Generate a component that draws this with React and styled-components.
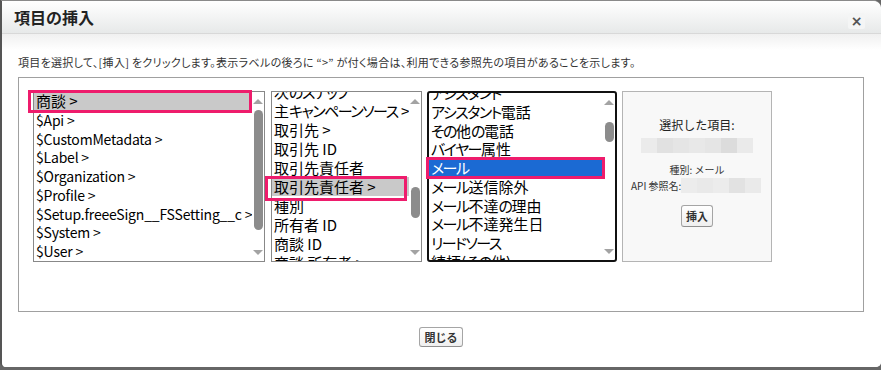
import React from "react";
import styled, { createGlobalStyle } from "styled-components";

const FONT = `"Noto Sans CJK JP", "Noto Sans", sans-serif`;

const Global = createGlobalStyle`
  html, body { margin: 0; padding: 0; background: #666; }
  body { font-family: ${FONT}; }
  * { box-sizing: border-box; }
`;

const Dialog = styled.div`
  width: 881px;
  height: 367px;
  background: #fff;
  border-left: 2px solid #555;
  border-top: 1px solid #8a8a8a;
  border-radius: 0 8px 5px 5px;
  overflow: hidden;
  display: flex;
  flex-direction: column;
`;

const Header = styled.div`
  height: 33px;
  flex: none;
  border-bottom: 1px solid #d8d8d8;
  background: linear-gradient(#ffffff, #e7e9e9);
  display: flex;
  align-items: flex-start;
  justify-content: space-between;
  padding: 0 16px 0 12px;
`;

const Title = styled.h1`
  margin: 5px 0 0;
  font-size: 16px;
  line-height: 22px;
  font-weight: bold;
  color: #222;
  font-family: ${FONT};
`;

const CloseBtn = styled.div`
  margin-top: 12px;
  width: 17px;
  height: 16px;
  border-radius: 2px;
  background: #f4f5f5;
  color: #555;
  font-size: 14px;
  line-height: 16px;
  font-weight: bold;
  text-align: center;
  font-family: "DejaVu Sans", sans-serif;
`;

const Body = styled.div`
  flex: 1;
  display: flex;
  flex-direction: column;
  padding: 0 17px 0 16px;
  background: linear-gradient(#f0f0f0 0, #ffffff 16px);
`;

const Instruction = styled.p`
  margin: 21px 0 8px;
  font-size: 11px;
  line-height: 14px;
  letter-spacing: 0.3px;
  color: #333;
  font-feature-settings: "palt";
  white-space: nowrap;
`;

const OuterBox = styled.div`
  height: 235px;
  border: 1px solid #a0a0a0;
  padding: 13px 14px;
  display: flex;
  align-items: flex-start;
`;

const ListBox = styled.div`
  position: relative;
  flex: none;
  width: ${(p) => p.$w}px;
  height: 171px;
  margin-left: ${(p) => p.$ml || 0}px;
  border: ${(p) => (p.$focus ? "2px solid #111" : "1px solid #888")};
  border-radius: ${(p) => (p.$focus ? "3px" : "0")};
  background: #fff;
  display: flex;
`;

const Viewport = styled.div`
  flex: 1;
  overflow: hidden;
  min-width: 0;
`;

const Items = styled.div`
  margin-top: ${(p) => p.$offset || 0}px;
`;

const Item = styled.div`
  height: ${(p) => p.$h}px;
  line-height: ${(p) => p.$h}px;
  font-size: ${(p) => (p.$latin ? 14 : 15)}px;
  letter-spacing: ${(p) => (p.$latin ? "-0.2px" : "0")};
  font-feature-settings: "palt";
  padding-left: 2px;
  white-space: nowrap;
  color: ${(p) => (p.$sel === "blue" ? "#fff" : "#000")};
  background: ${(p) =>
    p.$sel === "gray" ? "#c9c9c9" : p.$sel === "blue" ? "#1b6ad3" : "transparent"};
`;

const Kana = styled.span`
  letter-spacing: -1.5px;
`;

const Track = styled.div`
  width: 12px;
  flex: none;
  display: flex;
  flex-direction: column;
  align-items: center;
`;

const ArrowBox = styled.div`
  height: 18px;
  flex: none;
  display: flex;
  align-items: center;
  justify-content: center;
`;

const ArrowUp = styled.div`
  width: 0;
  height: 0;
  border-left: 5px solid transparent;
  border-right: 5px solid transparent;
  border-bottom: 5px solid #a3a3a3;
`;

const ArrowDown = styled.div`
  width: 0;
  height: 0;
  border-left: 5px solid transparent;
  border-right: 5px solid transparent;
  border-top: 5px solid #a3a3a3;
`;

const ThumbSpace = styled.div`
  flex: 1;
  width: 100%;
  display: flex;
  flex-direction: column;
  align-items: center;
  padding-top: ${(p) => p.$top}px;
`;

const Thumb = styled.div`
  width: 9px;
  height: ${(p) => p.$h}px;
  border-radius: 5px;
  background: #8c8c8c;
`;

const Annotation = styled.div`
  position: absolute;
  left: ${(p) => p.$l}px;
  top: ${(p) => p.$t}px;
  width: ${(p) => p.$w}px;
  height: ${(p) => p.$h}px;
  border: 3px solid #ee1c6c;
  pointer-events: none;
`;

const Panel = styled.div`
  flex: none;
  width: 150px;
  height: 171px;
  margin-left: 5px;
  border: 1px solid #b4b4b4;
  background: #f8f8f8;
  display: flex;
  flex-direction: column;
  align-items: center;
  padding-top: 25px;
  color: #222;
`;

const PanelTitle = styled.div`
  font-size: 12px;
  line-height: 16px;
`;

const Blur = styled.div`
  display: flex;
  height: 15px;
  margin-top: ${(p) => p.$mt || 0}px;
`;

const BlurCell = styled.div`
  width: 16px;
  height: 100%;
  background: ${(p) => p.$c};
`;

const SmallText = styled.div`
  font-size: 10px;
  line-height: 14px;
  margin-top: 10px;
  color: #333;
`;

const ApiRow = styled.div`
  align-self: flex-start;
  margin-left: 8px;
  margin-top: 1px;
  display: flex;
  align-items: center;
  font-size: 10px;
  line-height: 15px;
  color: #333;
`;

const Btn = styled.button`
  font-family: ${FONT};
  font-weight: bold;
  font-size: ${(p) => p.$fs || 11}px;
  color: #333;
  height: ${(p) => p.$h}px;
  width: ${(p) => p.$w}px;
  margin-top: ${(p) => p.$mt || 0}px;
  padding: 0;
  border: 1px solid #a5a5a5;
  border-bottom-color: #8f8f8f;
  border-radius: 3px;
  background: linear-gradient(#ffffff, #efefef);
  line-height: 1;
`;

const Footer = styled.div`
  display: flex;
  justify-content: center;
  padding-top: 15px;
`;

function Scrollbar({ top, h }) {
  return (
    <Track>
      <ArrowBox>
        <ArrowUp />
      </ArrowBox>
      <ThumbSpace $top={top}>
        <Thumb $h={h} />
      </ThumbSpace>
      <ArrowBox>
        <ArrowDown />
      </ArrowBox>
    </Track>
  );
}

const isLatin = (t) => /^[\x00-\x7f]+$/.test(t);

function Label({ text }) {
  const parts = text.split(/([\u3040-\u30ff]+)/);
  return parts.map((p, i) =>
    /^[\u3040-\u30ff]+$/.test(p) ? <Kana key={i}>{p}</Kana> : <React.Fragment key={i}>{p}</React.Fragment>
  );
}

function List({ items, sel, selKind, w, ml, focus, offset, rowH, thumbTop, thumbH, ann }) {
  return (
    <ListBox $w={w} $ml={ml} $focus={focus}>
      <Viewport>
        <Items $offset={offset}>
          {items.map((t, i) => (
            <Item
              key={i}
              $h={rowH}
              $latin={isLatin(t)}
              $sel={i === sel ? selKind : undefined}
            >
              <Label text={t} />
            </Item>
          ))}
        </Items>
      </Viewport>
      <Scrollbar top={thumbTop} h={thumbH} />
      {ann && <Annotation $l={ann[0]} $t={ann[1]} $w={ann[2]} $h={ann[3]} />}
    </ListBox>
  );
}

const list1 = [
  "商談 >",
  "$Api >",
  "$CustomMetadata >",
  "$Label >",
  "$Organization >",
  "$Profile >",
  "$Setup.freeeSign__FSSetting__c >",
  "$System >",
  "$User >",
];

const list2 = [
  "次のステップ",
  "主キャンペーンソース >",
  "取引先 >",
  "取引先 ID",
  "取引先責任者",
  "取引先責任者 >",
  "種別",
  "所有者 ID",
  "商談 ID",
  "商談 所有者 >",
];

const list3 = [
  "アシスタント",
  "アシスタント電話",
  "その他の電話",
  "バイヤー属性",
  "メール",
  "メール送信除外",
  "メール不達の理由",
  "メール不達発生日",
  "リードソース",
  "続柄(その他)",
];

const blur1 = ["#ebebeb", "#e1e1e1", "#e5e5e5", "#e8e8e8", "#e5e5e5", "#dcdcdc", "#eaeaea"];
const blur2 = ["#ececec", "#e9e9e9", "#ececec", "#e2e2e2", "#eaeaea"];

export default function App() {
  return (
    <>
      <Global />
      <Dialog>
        <Header>
          <Title>項目の挿入</Title>
          <CloseBtn>×</CloseBtn>
        </Header>
        <Body>
          <Instruction>
            項目を選択して、[挿入] をクリックします。表示ラベルの後ろに “&gt;” が付く場合は、利用できる参照先の項目があることを示します。
          </Instruction>
          <OuterBox>
            <List
              items={list1}
              sel={0}
              selKind="gray"
              w={232}
              rowH={18.75}
              offset={0}
              thumbTop={0}
              thumbH={120}
              ann={[-6, -2, 224, 23]}
            />
            <List
              items={list2}
              sel={5}
              selKind="gray"
              w={151}
              ml={6}
              rowH={19}
              offset={-10.5}
              thumbTop={77}
              thumbH={31}
              ann={[-7, 84, 142, 25]}
            />
            <List
              items={list3}
              sel={4}
              selKind="blue"
              w={190}
              ml={5}
              focus
              rowH={18.75}
              offset={-9}
              thumbTop={11}
              thumbH={20}
              ann={[-3, 64, 179, 22]}
            />
            <Panel>
              <PanelTitle>選択した項目:</PanelTitle>
              <Blur $mt={5}>
                {blur1.map((c, i) => (
                  <BlurCell key={i} $c={c} />
                ))}
              </Blur>
              <SmallText>種別: メール</SmallText>
              <ApiRow>
                API 参照名:
                <Blur>
                  {blur2.map((c, i) => (
                    <BlurCell key={i} $c={c} />
                  ))}
                </Blur>
              </ApiRow>
              <Btn $w={32} $h={22} $mt={12} $fs={11}>
                挿入
              </Btn>
            </Panel>
          </OuterBox>
          <Footer>
            <Btn $w={44} $h={20}>
              閉じる
            </Btn>
          </Footer>
        </Body>
      </Dialog>
    </>
  );
}
